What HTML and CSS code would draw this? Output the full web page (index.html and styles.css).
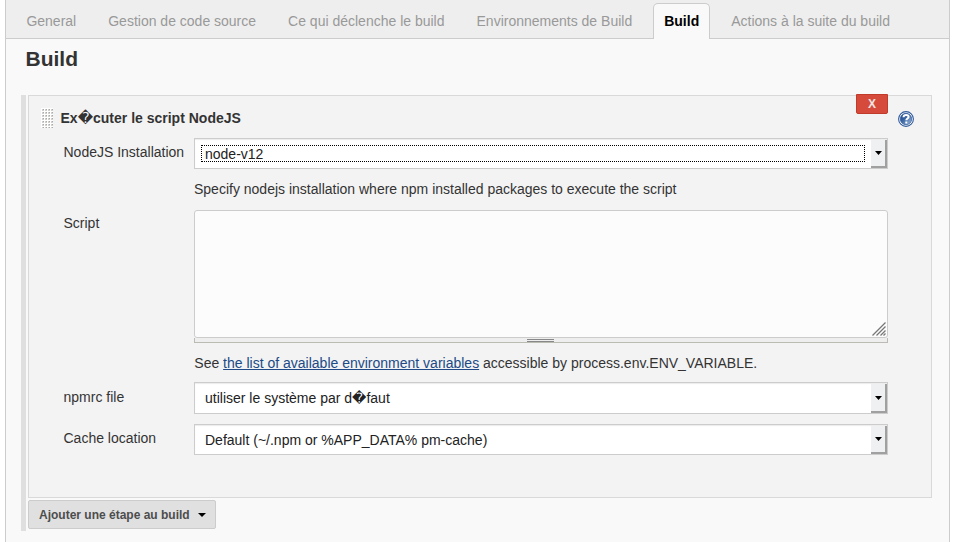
FILE: index.html
```html
<!DOCTYPE html>
<html lang="fr">
<head>
<meta charset="utf-8">
<title>Build</title>
<link rel="stylesheet" href="styles.css">
</head>
<body>
<main class="page">
  <nav class="tabs">
    <a class="tab">General</a>
    <a class="tab">Gestion de code source</a>
    <a class="tab">Ce qui déclenche le build</a>
    <a class="tab">Environnements de Build</a>
    <a class="tab active">Build</a>
    <a class="tab">Actions à la suite du build</a>
  </nav>
  <h1 class="title">Build</h1>
  <section class="steps">
    <div class="panel">
      <button class="delete">X</button>
      <svg class="help" width="16" height="16" viewBox="0 0 16 16">
        <defs><linearGradient id="hg" x1="0" y1="0" x2="1" y2="1"><stop offset="0" stop-color="#204a87"/><stop offset=".4" stop-color="#34609f"/><stop offset="1" stop-color="#a5c0e2"/></linearGradient></defs>
        <circle cx="8" cy="8" r="7.400" fill="#fff" stroke="#2f5a9a" stroke-width="1.100"/>
        <circle cx="8" cy="8" r="5.700" fill="url(#hg)" stroke="#2a5596" stroke-width=".7"/>
        <path d="M5.500 6.200C5.600 4.400 6.800 3.900 8.100 3.900c1.500 0 2.500.8 2.500 2 0 1.500-2.300 1.600-2.300 3.300M8.300 10.400v2.100" fill="none" stroke="#fff" stroke-width="2"/>
      </svg>
      <div class="heading">
        <svg class="grip" width="12" height="20" viewBox="0 0 12 20">
          <defs><pattern id="dots" width="3" height="3" patternUnits="userSpaceOnUse"><rect width="3" height="3" fill="#fff"/><rect x="1" y="1" width="2" height="2" fill="#d0d0cc"/><rect x="2" y="1" width="1" height="1" fill="#aaa"/></pattern></defs>
          <rect width="12" height="20" fill="url(#dots)"/>
        </svg>
        <b>Ex<span class="bad">�</span>cuter le script NodeJS</b>
      </div>
      <div class="form">
        <div class="label">NodeJS Installation</div>
        <div class="select focused"><span class="value">node-v12</span><span class="arrow"><svg width="7" height="4" viewBox="0 0 7 4"><path d="M0 0h7L3.500 4z"/></svg></span></div>
        <p class="note note-install">Specify nodejs installation where npm installed packages to execute the script</p>
        <div class="label label-script">Script</div>
        <div class="editor">
          <div class="area"><svg width="14" height="14" viewBox="0 0 14 14"><path d="M.5 13.500l13-13M4.500 13.500l9-9M8.500 13.500l5-5M11.500 13.500l2-2" stroke="#777" stroke-width="1.300"/></svg></div>
          <div class="resize"><span class="lines"></span></div>
        </div>
        <p class="note note-script">See <a class="link">the list of available environment variables</a> accessible by process.env.ENV_VARIABLE.</p>
        <div class="label label-npmrc">npmrc file</div>
        <div class="select tall"><span class="value">utiliser le système par d<span class="bad">�</span>faut</span><span class="arrow"><svg width="7" height="4" viewBox="0 0 7 4"><path d="M0 0h7L3.500 4z"/></svg></span></div>
        <div class="label label-cache">Cache location</div>
        <div class="select cache"><span class="value">Default (~/.npm or %APP_DATA% pm-cache)</span><span class="arrow"><svg width="7" height="4" viewBox="0 0 7 4"><path d="M0 0h7L3.500 4z"/></svg></span></div>
      </div>
    </div>
    <button class="add"><span>Ajouter une étape au build</span><svg width="8" height="4" viewBox="0 0 8 4"><path d="M0 0h8L4 4z"/></svg></button>
  </section>
</main>
</body>
</html>
```
FILE: styles.css
```css
* { box-sizing: border-box; }
body {
  margin: 0;
  background: #fff;
  color: #333;
  font: 14px/18px "Liberation Sans", Arial, sans-serif;
}
.page {
  width: 945px;
  height: 542px;
  margin-left: 5px;
  overflow: hidden;
  background: #f9f9f9;
  border: 1px solid #ccc;
  border-width: 0 1px;
}
.tabs {
  display: flex;
  align-items: flex-end;
  gap: 10px;
  height: 39px;
  padding-left: 9.4px;
  background: #eee;
  border-bottom: 1px solid #ccc;
}
.tab {
  height: 36px;
  margin-bottom: -1px;
  padding: 8px 10px 0;
  border: 1px solid transparent;
  border-bottom: 0;
  border-radius: 5px 5px 0 0;
  color: #999;
  white-space: nowrap;
}
.active {
  background: #f9f9f9;
  border-color: #ccc;
  color: #000;
  font-weight: bold;
}
.title {
  height: 56px;
  margin: 0;
  padding: 8px 0 0 19.500px;
  font-size: 21px;
  line-height: 24px;
}
.steps {
  height: 436px;
  margin: 0 17px 0 15px;
  padding-left: 2px;
  border-left: 5px solid #dfdfdf;
}
.panel {
  position: relative;
  height: 403px;
  background: #f3f3f3;
  border: 1px solid #d9d9d9;
}
.delete {
  position: absolute;
  top: -2px;
  right: 43px;
  width: 32px;
  height: 20px;
  padding: 0;
  background: #d64a3b;
  border: 1px solid #c13b2c;
  border-radius: 0 0 2px 2px;
  color: #f3e4e2;
  font: bold 12px/18px "Liberation Sans", Arial, sans-serif;
}
.help { position: absolute; top: 15px; right: 17px; }
.heading {
  display: flex;
  gap: 7.500px;
  height: 42px;
  padding: 12px 0 0 12px;
}
.heading b { padding-top: 1px; }
.bad {
  font-family: "DejaVu Sans", sans-serif;
  font-weight: normal;
  line-height: 1;
}
.heading .bad { font-size: 15px; }
.form {
  display: grid;
  grid-template-columns: 131px 694px;
  padding-left: 34px;
}
.label { padding: 5px 0 0 .5px; }
.label-script { padding-top: 4px; }
.label-npmrc { padding-top: 6px; }
.select {
  display: flex;
  height: 31px;
  background: #fff;
  border: 1px solid #ccc;
  box-shadow: inset 0 1px 1px #ececec;
}
.tall { height: 32px; }
.cache { margin-top: 10px; }
.label-cache { padding-top: 15px; }
.value {
  flex: 1;
  align-self: center;
  height: 18px;
  margin: 0 6px;
  padding-left: 4px;
  color: #222;
}
.focused .value {
  height: 17px;
  padding-left: 3px;
  border: 1px dotted #000;
  line-height: 17px;
}
.arrow {
  display: flex;
  align-items: center;
  justify-content: center;
  width: 16px;
  margin-top: 1px;
  background: #eff0f1;
  border: solid #a0a0a0;
  border-width: 0 2px 2px 0;
}
.note { grid-column: 2; margin: 0; }
.note-install { height: 41px; padding-top: 11px; }
.area {
  display: flex;
  align-items: flex-end;
  justify-content: flex-end;
  height: 128px;
  padding: 0 1px 1px 0;
  background: #fcfcfc;
  border: 1px solid #ccc;
  border-radius: 3px;
}
.resize {
  display: flex;
  justify-content: center;
  height: 5px;
  background: #eee;
  border: 1px solid #bbbbb4;
  border-top: 0;
}
.lines {
  width: 27px;
  height: 3px;
  margin: 1px 1px 0 0;
  border: solid #888;
  border-width: 1px 0;
}
.note-script { height: 39px; padding: 11px 0 0 .3px; }
.link { color: #204a87; text-decoration: underline; }
.add {
  display: flex;
  align-items: center;
  justify-content: space-between;
  width: 188px;
  height: 29px;
  margin-top: 2px;
  padding: 0 9px 0 10px;
  background: #e0e0e0;
  border: 1px solid #ccc;
  border-radius: 2px;
  color: #4d4d4d;
  font: bold 12px/18px "Liberation Sans", Arial, sans-serif;
}
```
